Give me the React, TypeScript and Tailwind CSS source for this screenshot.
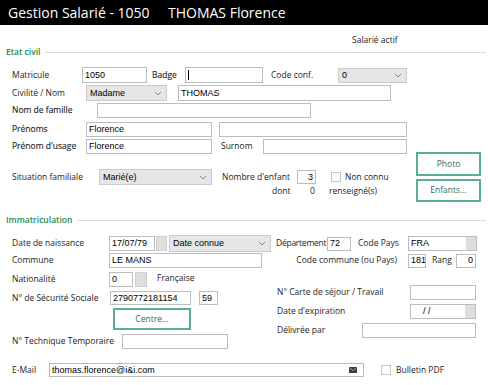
import React from "react";

const inputFont = "font-['Liberation_Sans',Arial,sans-serif] text-[9px] text-black";
const boldish = "[-webkit-text-stroke:0.12px_#1c1c1c]";

function Box({ className = "", children, right = false }: { className?: string; children?: React.ReactNode; right?: boolean }) {
  return (
    <div
      className={`flex shrink-0 items-center overflow-hidden whitespace-nowrap border border-[#bcbcbc] bg-white px-[2px] ${inputFont} ${right ? "justify-end" : ""} ${className}`}
    >
      {children}
    </div>
  );
}

function Select({ className = "", children }: { className?: string; children?: React.ReactNode }) {
  return (
    <div
      className={`flex shrink-0 items-center justify-between border border-[#cacaca] bg-[#e6e6e6] pl-[3px] pr-[4px] ${inputFont} ${className}`}
    >
      <span>{children}</span>
      <svg width="8" height="5" viewBox="0 0 8 5">
        <path d="M1 1l3 3 3-3" stroke="#8a8a8a" strokeWidth="1" fill="none" />
      </svg>
    </div>
  );
}

function Mini({ className = "" }: { className?: string }) {
  return <div className={`shrink-0 border border-[#d0d0d0] bg-[#dedede] ${className}`} />;
}

function Check({ className = "" }: { className?: string }) {
  return <div className={`h-[10px] w-[10px] shrink-0 border border-[#c4c4c4] bg-white ${className}`} />;
}

function Lbl({ className = "", children }: { className?: string; children: React.ReactNode }) {
  return <span className={`shrink-0 whitespace-nowrap ${className}`}>{children}</span>;
}

function GreenBtn({ className = "", children }: { className?: string; children: React.ReactNode }) {
  return (
    <div className={`flex shrink-0 items-center justify-center border-2 border-[#5aae93] bg-white text-[#2f6b5c] ${className}`}>
      {children}
    </div>
  );
}

function Header({ className = "", children }: { className?: string; children: React.ReactNode }) {
  return (
    <div className={`flex h-[16px] items-center pl-[6px] pr-[2px] ${className}`}>
      <span className="font-semibold text-[#1e8a52]">{children}</span>
      <div className="ml-[5px] h-px flex-1 bg-[#dadada]" />
    </div>
  );
}

export default function App() {
  return (
    <div className="h-[385px] w-[488px] overflow-hidden bg-white font-['Open_Sans',sans-serif] text-[8.5px] leading-none text-[#1c1c1c]">
      {/* Title bar */}
      <div className="flex h-[25px] items-center bg-black pl-[8px] text-[14px] text-white">
        <span className="w-[160px] shrink-0 whitespace-nowrap">Gestion Salarié - 1050</span>
        <span className="whitespace-nowrap">THOMAS Florence</span>
      </div>

      <div className="flex h-[19px] items-center pl-[352px] pt-[12px]">Salarié actif</div>

      <Header>Etat civil</Header>

      {/* Etat civil body */}
      <div className="mt-[7px] flex pl-[12px]">
        <div className="w-[404px] shrink-0">
          <div className="flex h-[16px] items-center">
            <Lbl className="w-[70px]">Matricule</Lbl>
            <Box className="h-[16px] w-[65px]">1050</Box>
            <Lbl className={`ml-[5px] w-[33px] ${boldish}`}>Badge</Lbl>
            <Box className="h-[16px] w-[78px]">
              <div className="h-[10px] w-px bg-black" />
            </Box>
            <Lbl className="ml-[8px] w-[67px]">Code conf.</Lbl>
            <Select className="h-[15px] w-[69px]">0</Select>
          </div>
          <div className="mt-[2px] flex h-[16px] items-center">
            <Lbl className="w-[74px]">Civilité / Nom</Lbl>
            <Select className="h-[16px] w-[81px]">Madame</Select>
            <Box className="ml-[11px] h-[16px] w-[213px]">THOMAS</Box>
          </div>
          <div className="mt-[2px] flex h-[15px] items-center">
            <Lbl className={`w-[85px] ${boldish}`}>Nom de famille</Lbl>
            <Box className="h-[15px] w-[214px]" />
          </div>
          <div className="mt-[4px] flex h-[15px] items-center">
            <Lbl className={`w-[74px] ${boldish}`}>Prénoms</Lbl>
            <Box className="h-[15px] w-[126px]">Florence</Box>
            <Box className="ml-[7px] h-[15px] w-[188px]" />
          </div>
          <div className="mt-[2px] flex h-[15px] items-center">
            <Lbl className={`w-[74px] ${boldish}`}>Prénom d'usage</Lbl>
            <Box className="h-[15px] w-[126px]">Florence</Box>
            <Lbl className="ml-[9px] w-[42px]">Surnom</Lbl>
            <Box className="h-[15px] w-[144px]" />
          </div>
          <div className="mt-[15px] flex h-[16px] items-center">
            <Lbl className="w-[87px]">Situation familiale</Lbl>
            <Select className="h-[16px] w-[113px]">Marié(e)</Select>
            <Lbl className="ml-[10px] w-[75px]">Nombre d'enfant</Lbl>
            <Box right className="h-[14px] w-[19px]">3</Box>
            <Check className="ml-[15px]" />
            <Lbl className="ml-[4px]">Non connu</Lbl>
          </div>
          <div className="flex h-[13px] items-center">
            <Lbl className="ml-[260px] w-[38px]">dont</Lbl>
            <Lbl className="w-[19px]">0</Lbl>
            <Lbl>renseigné(s)</Lbl>
          </div>
        </div>
        <div className="w-[65px] shrink-0">
          <GreenBtn className="mt-[85px] h-[24px] w-[65px]">Photo</GreenBtn>
          <GreenBtn className="mt-[3px] h-[23px] w-[65px]">Enfants...</GreenBtn>
        </div>
      </div>

      <Header className="mt-[10px]">Immatriculation</Header>

      <div className="pl-[12px]">
        <div className="mt-[7px] flex h-[17px] items-center">
          <Lbl className="w-[97px]">Date de naissance</Lbl>
          <Box className="h-[15px] w-[46px]">17/07/79</Box>
          <Mini className="ml-[1px] h-[15px] w-[11px]" />
          <Select className="ml-[2px] h-[17px] w-[102px]">Date connue</Select>
          <Lbl className="ml-[5px] w-[51px] tracking-[-0.25px]">Département</Lbl>
          <Box className="h-[14px] w-[24px]">72</Box>
          <Lbl className="ml-[7px] w-[50px]">Code Pays</Lbl>
          <Box className="h-[15px] w-[69px] justify-between pr-0">
            <span>FRA</span>
            <Mini className="h-[13px] w-[10px] border-0" />
          </Box>
        </div>
        <div className="mt-[1px] flex h-[15px] items-center">
          <Lbl className="w-[97px]">Commune</Lbl>
          <Box className="h-[15px] w-[153px]">LE MANS</Box>
          <div className="ml-[40px] flex w-[95px] shrink-0 justify-end whitespace-nowrap">Code commune (ou Pays)</div>
          <Box className="ml-[11px] h-[14px] w-[18px]">181</Box>
          <Lbl className="ml-[6px] w-[24px]">Rang</Lbl>
          <Box right className="h-[14px] w-[20px]">0</Box>
        </div>
        <div className="mt-[4px] flex h-[15px] items-center">
          <Lbl className="w-[97px]">Nationalité</Lbl>
          <Box className="h-[15px] w-[24px]">0</Box>
          <Mini className="ml-[2px] h-[15px] w-[12px]" />
          <Lbl className="ml-[10px] -mt-[2px]">Française</Lbl>
        </div>

        <div className="-mt-[2px] flex">
          <div className="w-[265px] shrink-0">
            <div className="mt-[6px] flex h-[14px] items-center">
              <Lbl className="w-[98px]">N° de Sécurité Sociale</Lbl>
              <Box className="h-[14px] w-[81px]">2790772181154</Box>
              <Box className="ml-[8px] h-[14px] w-[19px]">59</Box>
            </div>
            <GreenBtn className="ml-[101px] mt-[3px] h-[22px] w-[78px]">Centre...</GreenBtn>
            <div className="mt-[4px] flex h-[15px] items-center">
              <Lbl className="w-[110px]">N° Technique Temporaire</Lbl>
              <Box className="h-[15px] w-[106px]" />
            </div>
          </div>
          <div className="shrink-0">
            <div className="flex h-[15px] items-center">
              <Lbl className="w-[133px]">N° Carte de séjour / Travail</Lbl>
              <Box className="h-[15px] w-[66px]" />
            </div>
            <div className="mt-[4px] flex h-[15px] items-center">
              <Lbl className="w-[133px]">Date d'expiration</Lbl>
              <Box className="h-[15px] w-[66px] justify-between pr-0">
                <span className="pl-[10px]">/ /</span>
                <Mini className="h-[13px] w-[10px] border-0" />
              </Box>
            </div>
            <div className="mt-[4px] flex h-[15px] items-center">
              <Lbl className="w-[85px]">Délivrée par</Lbl>
              <Box className="h-[15px] w-[114px]" />
            </div>
          </div>
        </div>

        <div className="mt-[14px] flex h-[14px] items-center">
          <Lbl className="w-[37px]">E-Mail</Lbl>
          <Box className="h-[14px] w-[315px] justify-between pr-[6px]">
            <span>thomas.florence@i&amp;i.com</span>
            <svg width="8" height="6" viewBox="0 0 8 6">
              <rect x="0" y="0" width="8" height="6" fill="#3d3d3d" />
              <path d="M0.5 0.8L4 3.5 7.5 0.8" stroke="#bdbdbd" strokeWidth="0.8" fill="none" />
            </svg>
          </Box>
          <Check className="ml-[17px]" />
          <Lbl className="ml-[5px]">Bulletin PDF</Lbl>
        </div>
      </div>
    </div>
  );
}
